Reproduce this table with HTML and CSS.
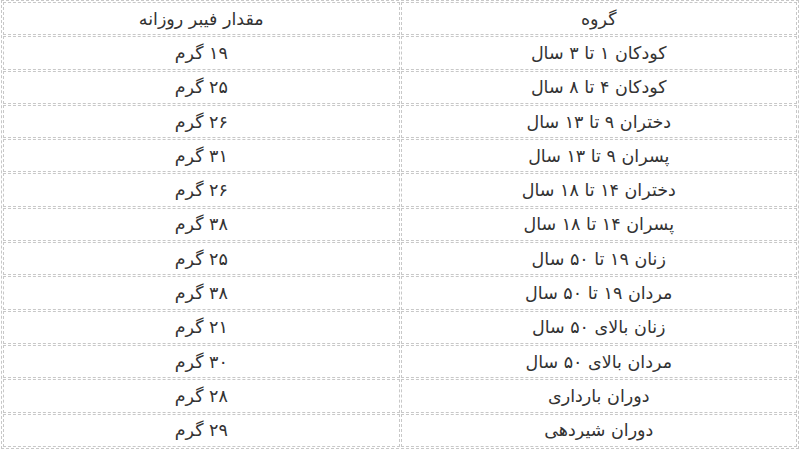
FILE: index.html
```html
<!DOCTYPE html>
<html lang="fa" dir="rtl">
<head>
<meta charset="utf-8">
<link rel="stylesheet" href="styles.css">
</head>
<body>
<table class="fiber">
<thead>
<tr><th>گروه</th><th>مقدار فیبر روزانه</th></tr>
</thead>
<tbody>
<tr><td>کودکان ۱ تا ۳ سال</td><td>۱۹ گرم</td></tr>
<tr><td>کودکان ۴ تا ۸ سال</td><td>۲۵ گرم</td></tr>
<tr><td>دختران ۹ تا ۱۳ سال</td><td>۲۶ گرم</td></tr>
<tr><td>پسران ۹ تا ۱۳ سال</td><td>۳۱ گرم</td></tr>
<tr><td>دختران ۱۴ تا ۱۸ سال</td><td>۲۶ گرم</td></tr>
<tr><td>پسران ۱۴ تا ۱۸ سال</td><td>۳۸ گرم</td></tr>
<tr><td>زنان ۱۹ تا ۵۰ سال</td><td>۲۵ گرم</td></tr>
<tr><td>مردان ۱۹ تا ۵۰ سال</td><td>۳۸ گرم</td></tr>
<tr><td>زنان بالای ۵۰ سال</td><td>۲۱ گرم</td></tr>
<tr><td>مردان بالای ۵۰ سال</td><td>۳۰ گرم</td></tr>
<tr><td>دوران بارداری</td><td>۲۸ گرم</td></tr>
<tr><td>دوران شیردهی</td><td>۲۹ گرم</td></tr>
</tbody>
</table>
</body>
</html>
```
FILE: styles.css
```css
html, body {
  margin: 0;
  padding: 0;
  background: #fff;
}
body {
  font-family: "DejaVu Sans", "Noto Sans", sans-serif;
  color: #333;
  font-size: 17.5px;
  line-height: 22px;
}
.fiber {
  width: 798px;
  margin: 0 1px;
  border: 1px dashed #c8c8c8;
  border-spacing: 1px;
  table-layout: fixed;
}
.fiber th,
.fiber td {
  border: 1px dashed #c8c8c8;
  text-align: center;
  font-weight: normal;
  height: 31.3px;
  padding: 0;
  width: 50%;
}
```
